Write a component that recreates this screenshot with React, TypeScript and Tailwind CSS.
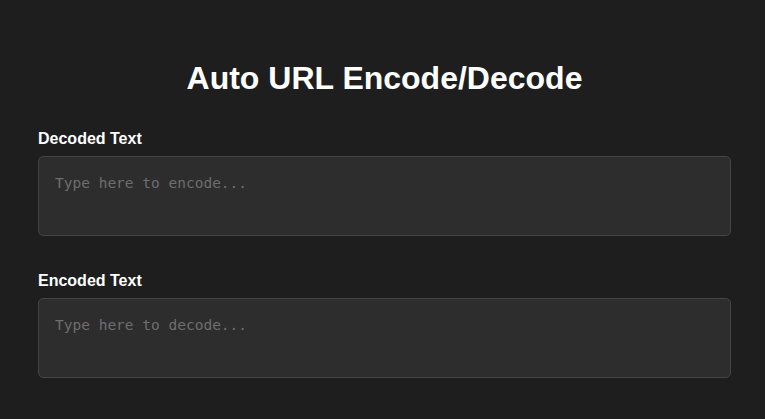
import React, { useState } from 'react';

const Field = ({
  label,
  placeholder,
  value,
  onChange,
}: {
  label: string;
  placeholder: string;
  value: string;
  onChange: (v: string) => void;
}) => {
  return (
    <div className="mb-[36px]">
      <label className="block text-[16px] leading-[18px] font-bold text-white mb-[8px]">
        {label}
      </label>
      <textarea
        className="block w-[693px] h-[80px] p-4 bg-[#2d2d2d] border border-[#444444] rounded-[5px] text-[14.5px] leading-[20px] text-[#e0e0e0] placeholder:text-[#6e6e6e] resize-none outline-none"
        style={{ fontFamily: '"DejaVu Sans Mono", monospace' }}
        placeholder={placeholder}
        value={value}
        onChange={(e) => onChange(e.target.value)}
      />
    </div>
  );
};

export default function App() {
  const [decoded, setDecoded] = useState('');
  const [encoded, setEncoded] = useState('');

  const handleDecoded = (v: string) => {
    setDecoded(v);
    setEncoded(encodeURIComponent(v));
  };

  const handleEncoded = (v: string) => {
    setEncoded(v);
    try {
      setDecoded(decodeURIComponent(v));
    } catch {
      // ignore bad input
    }
  };

  return (
    <div
      className="min-h-[419px] bg-[#1e1e1e] pt-[60px] pl-[38px]"
      style={{ fontFamily: '"Liberation Sans", Arial, sans-serif' }}
    >
      <h1 className="w-[693px] text-center text-[32px] leading-[37px] font-bold text-white mb-[33px]">
        Auto URL Encode/Decode
      </h1>
      <Field
        label="Decoded Text"
        placeholder="Type here to encode..."
        value={decoded}
        onChange={handleDecoded}
      />
      <Field
        label="Encoded Text"
        placeholder="Type here to decode..."
        value={encoded}
        onChange={handleEncoded}
      />
    </div>
  );
}
